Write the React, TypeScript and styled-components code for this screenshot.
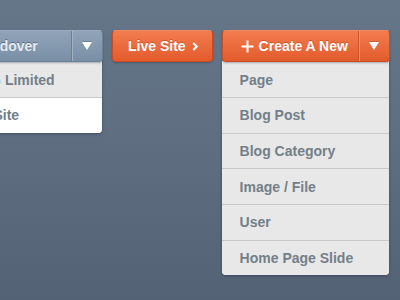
import React from 'react';
import styled, { createGlobalStyle, css } from 'styled-components';

const GlobalStyle = createGlobalStyle`
  html, body {
    margin: 0;
    padding: 0;
  }
  body {
    font-family: "Liberation Sans", Arial, Helvetica, sans-serif;
    background: linear-gradient(180deg, #667689 0%, #5e6d80 50%, #546275 100%);
    width: 400px;
    height: 300px;
    overflow: hidden;
  }
`;

type Tone = 'slate' | 'orange';

const tones = {
  slate: css`
    background: linear-gradient(180deg, #90a3b8 0%, #7a8fa6 100%);
    border: 1px solid #6d8299;
    border-top-color: #9aacbf;
    color: #e7edf2;
    text-shadow: 0 -1px 0 rgba(60, 78, 98, 0.6);
  `,
  orange: css`
    background: linear-gradient(180deg, #f27c4f 0%, #e35b2c 100%);
    border: 1px solid #cf4a1d;
    border-top-color: #f08a62;
    color: #ffffff;
    text-shadow: 0 -1px 0 rgba(170, 60, 20, 0.5);
  `,
};

const Toolbar = styled.div`
  display: flex;
  align-items: flex-start;
  padding-top: 30px;
  height: 270px;
`;

const Group = styled.div<{ $offset?: number }>`
  display: flex;
  flex-direction: column;
  margin-left: ${(p) => p.$offset ?? 0}px;
`;

const SplitButton = styled.div<{ $tone: Tone }>`
  display: flex;
  height: 32px;
  box-sizing: border-box;
  border-radius: 4px;
  box-shadow: 0 1px 2px rgba(30, 40, 55, 0.35);
  position: relative;
  z-index: 2;
  ${(p) => tones[p.$tone]}
`;

const MainPart = styled.div<{ $width: number; $pad: number }>`
  display: flex;
  align-items: center;
  gap: 5px;
  width: ${(p) => p.$width}px;
  box-sizing: border-box;
  padding-left: ${(p) => p.$pad}px;
  font-size: 14px;
  font-weight: bold;
  white-space: nowrap;
  overflow: hidden;
`;

const CaretPart = styled.div<{ $tone: Tone }>`
  display: flex;
  align-items: center;
  justify-content: center;
  width: 30px;
  border-left: 1px solid ${(p) => (p.$tone === 'orange' ? '#cf5128' : '#6a7f96')};
  box-shadow: inset 1px 0 0 ${(p) => (p.$tone === 'orange' ? '#f59a75' : '#a2b2c3')};
`;

const Triangle = styled.span`
  width: 0;
  height: 0;
  border-left: 5px solid transparent;
  border-right: 5px solid transparent;
  border-top: 8px solid #ffffff;
  filter: drop-shadow(0 -1px 0 rgba(0, 0, 0, 0.15));
`;

const LinkButton = styled.div`
  display: flex;
  align-items: center;
  gap: 6px;
  height: 32px;
  box-sizing: border-box;
  padding: 0 13px 0 15px;
  border-radius: 4px;
  font-size: 14px;
  font-weight: bold;
  box-shadow: 0 1px 2px rgba(30, 40, 55, 0.35);
  ${tones.orange}
`;

const Menu = styled.ul<{ $width: number }>`
  list-style: none;
  margin: -1px 0 0;
  padding: 0;
  width: ${(p) => p.$width}px;
  background: #e8e8e8;
  border-radius: 0 0 4px 4px;
  overflow: hidden;
  box-shadow: 0 1px 3px rgba(25, 35, 50, 0.45);
`;

const MenuItem = styled.li<{ $light?: boolean }>`
  box-sizing: border-box;
  display: flex;
  align-items: center;
  padding-left: 18px;
  font-size: 14px;
  font-weight: bold;
  color: #738089;
  white-space: nowrap;
  background: ${(p) => (p.$light ? '#ffffff' : '#e8e8e8')};
  & + & {
    border-top: 1px solid #c9c9c9;
    height: 35.7px;
  }
  &:first-child {
    height: 36px;
    padding-top: 1px;
  }
`;

const Plus = () => (
  <svg width="13" height="13" viewBox="0 0 13 13">
    <path d="M6.5 0.5v12M0.5 6.5h12" stroke="#fff" strokeWidth="2" />
  </svg>
);

const Chevron = () => (
  <svg width="7" height="9" viewBox="0 0 7 9">
    <path d="M1.2 1l3.6 3.5L1.2 8" stroke="#fff" strokeWidth="2" fill="none" />
  </svg>
);

const createItems = ['Page', 'Blog Post', 'Blog Category', 'Image / File', 'User', 'Home Page Slide'];

export default function App() {
  return (
    <>
      <GlobalStyle />
      <Toolbar>
        <Group $offset={-38}>
          <SplitButton $tone="slate">
            <MainPart $width={108} $pad={18}>Andover</MainPart>
            <CaretPart $tone="slate">
              <Triangle />
            </CaretPart>
          </SplitButton>
          <Menu $width={140}>
            <MenuItem>AG Limited</MenuItem>
            <MenuItem $light>A Site</MenuItem>
          </Menu>
        </Group>
        <Group $offset={9}>
          <LinkButton>
            Live Site
            <Chevron />
          </LinkButton>
        </Group>
        <Group $offset={9}>
          <SplitButton $tone="orange">
            <MainPart $width={135} $pad={18}>
              <Plus />
              Create A New
            </MainPart>
            <CaretPart $tone="orange">
              <Triangle />
            </CaretPart>
          </SplitButton>
          <Menu $width={167}>
            {createItems.map((item) => (
              <MenuItem key={item}>{item}</MenuItem>
            ))}
          </Menu>
        </Group>
      </Toolbar>
    </>
  );
}
